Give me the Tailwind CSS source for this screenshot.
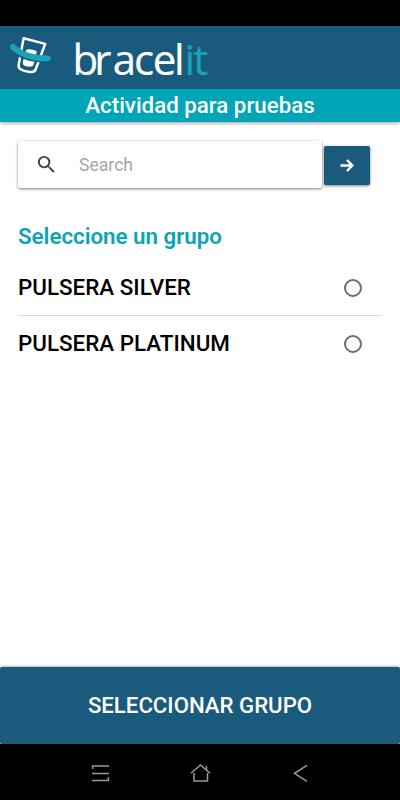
<!DOCTYPE html>
<html lang="es">
<head>
<meta charset="utf-8">
<title>Bracelit</title>
<script src="https://cdn.jsdelivr.net/npm/@tailwindcss/browser@4"></script>
</head>
<body class="bg-white">
<div class="w-[400px] h-[800px] flex flex-col overflow-hidden font-[Roboto,sans-serif] font-medium text-[22.4px] leading-[26px] text-black">
  <div class="h-[26px] bg-black shrink-0"></div>
  <header class="shrink-0 shadow-[0_1px_4px_rgba(0,0,0,0.4)]">
    <div class="h-[63px] bg-[#195a7d]">
      <svg class="block" width="220" height="63" viewBox="0 26 220 63" role="img" aria-label="bracelit">
        <path d="M23.6 38.3 45.2 43.9 35.6 69.5Q34.500 72.3 30.500 71.900 24.5 71.5 20.8 69.5 18.1 68 18.7 64.500Z" fill="none" stroke="#fff" stroke-width="2.5" stroke-linejoin="round"/>
        <path d="M26.5 49.5Q31 48.5 36.8 51.2L33.6 64.8Q32.8 67 29.5 66.8 25.500 66.4 23.400 64.900 22.600 63.500 23 61Z" fill="#fff"/>
        <path d="M12.9 48C20 55.500 32 60 48 59" fill="none" stroke="#195a7d" stroke-width="6.200"/>
        <path d="M12.900 46.900C20 54 33 58.600 47.900 58.400" fill="none" stroke="#1aa3b9" stroke-width="5.8" stroke-linecap="round"/>
        <g font-family="Open Sans, Noto Sans, sans-serif" font-size="42" font-weight="400" stroke-width="0.2">
          <text x="72.5 94.300 112.800 134 152.700 174" y="75.300" fill="#fff" stroke="#fff">bracel<tspan x="184.500 193.300" fill="#1aa3b9" stroke="#1aa3b9">it</tspan></text>
        </g>
      </svg>
    </div>
    <h1 class="h-[33px] bg-[#00a5b8] text-white text-center text-[22.3px] leading-[32px]">Actividad para pruebas</h1>
  </header>
  <main class="flex-1 px-[18px] pt-[19px]">
    <div class="flex items-start gap-[2px]">
      <label class="w-[304px] h-[47px] flex items-center pl-[17px] rounded-[2px] bg-white shadow-[0_1px_3px_rgba(0,0,0,0.5)]">
        <svg class="w-[23px] h-[23px] fill-[#404040]" viewBox="0 0 24 24"><path d="M15.5 14h-.79l-.28-.27A6.47 6.47 0 0 0 16 9.5 6.5 6.5 0 1 0 9.5 16c1.61 0 3.09-.59 4.23-1.57l.27.28v.79l5 4.99L20.49 19l-4.99-5zm-6 0C7.01 14 5 11.99 5 9.5S7.01 5 9.5 5 14 7.01 14 9.5 11.99 14 9.5 14z"/></svg>
        <span class="ml-[21px] text-[17.6px] font-normal text-[#a5a5a5]">Search</span>
      </label>
      <button class="mt-[5px] w-[46px] h-[39px] flex items-center justify-center rounded-[2px] bg-[#195a7d] shadow-[0_1px_3px_rgba(0,0,0,0.5)]">
        <svg width="16" height="16" viewBox="0 0 16 16" fill="none" stroke="#fff" stroke-width="2.4"><path d="M1.5 7.5H13M8 2 13.3 7.5 8 13"/></svg>
      </button>
    </div>
    <h2 class="mt-[35px] text-[22.3px] font-semibold text-[#0aa3b7]">Seleccione un grupo</h2>
    <div class="mt-[10px] h-[57px] flex items-center justify-between pr-[20px] border-b border-[#d8d8d8]">
      <span>PULSERA SILVER</span>
      <span class="w-[18px] h-[18px] rounded-full border-2 border-[#6d6d6d] mt-[1px]"></span>
    </div>
    <div class="h-[56px] flex items-center justify-between pr-[20px]">
      <span class="pb-[2px]">PULSERA PLATINUM</span>
      <span class="w-[18px] h-[18px] rounded-full border-2 border-[#6d6d6d]"></span>
    </div>
  </main>
  <button class="h-[77px] shrink-0 pb-[2px] rounded-[2px] bg-[#195a7d] text-white text-[22.2px] shadow-[0_0_3px_rgba(0,0,0,0.6)]">SELECCIONAR GRUPO</button>
  <nav class="h-[56px] shrink-0 bg-black">
    <svg class="block" width="400" height="56" viewBox="0 744 400 56" fill="none" stroke="#999" stroke-width="1.5">
      <path d="M92.6 769V766H109M92 773.5H109M92 780.5H108.4V777"/>
      <path d="M191 773.3 200.5 765 210 773.3M206.5 770V766M194 773V781H207.5V773"/>
      <path d="M307 765.3 294.5 773.3 307 781.3"/>
    </svg>
  </nav>
</div>
</body>
</html>
